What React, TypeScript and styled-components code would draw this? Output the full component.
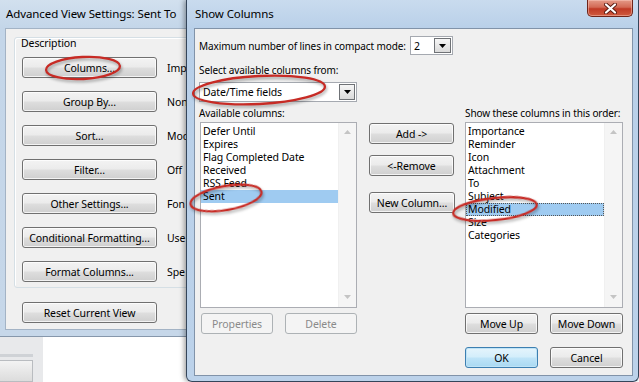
import React from "react";
import styled, { createGlobalStyle, css } from "styled-components";

const GlobalStyle = createGlobalStyle`
  html, body {
    margin: 0;
    padding: 0;
    background: #fff;
  }
  body {
    font-family: "Noto Sans", "Open Sans", sans-serif;
    font-size: 10px;
    letter-spacing: -0.1px;
    color: #000;
  }
`;

const Desktop = styled.div`
  position: relative;
  width: 639px;
  height: 382px;
  overflow: hidden;
  background: #fff;
`;

/* what peeks out behind the dialogs, bottom left */
const BackWindow = styled.div`
  position: absolute;
  left: 0;
  top: 337px;
  width: 43px;
  height: 45px;
  background: #e8e9eb;
  display: flex;
  flex-direction: column;
  padding-top: 17px;
  box-sizing: border-box;
`;
const BackStripe = styled.div`
  width: 33px;
  height: 3px;
  background: #cfd2d6;
`;
const BackBox = styled.div`
  margin-top: 3px;
  width: 33px;
  flex: 1;
  box-sizing: border-box;
  border: 1px solid #b9bcc0;
  border-left: none;
  background: linear-gradient(#f3f3f3, #dcdcdc);
`;

const Window = styled.div<{ $active?: boolean }>`
  position: absolute;
  top: 0;
  box-sizing: border-box;
  display: flex;
  flex-direction: column;
  background: ${(p) =>
    p.$active
      ? "linear-gradient(#c9dbee 0px, #b9d0e9 28px, #bcd2ea 100%)"
      : "linear-gradient(#d2e0ee 0px, #c4d6e9 28px, #c6d7e9 100%)"};
`;

/* only its left part shows; the rest sits under Show Columns */
const AdvancedWindow = styled(Window)`
  left: 0;
  width: 187px;
  height: 337px;
  overflow: hidden;
  border-bottom: 1px solid #8697ab;
`;

const ColumnsWindow = styled(Window)`
  left: 186px;
  width: 453px;
  height: 382px;
  border: 1px solid #34455a;
  border-top: none;
  border-radius: 0 0 6px 6px;
  box-shadow: -2px 0 5px rgba(0, 0, 0, 0.35);
`;

const TitleBar = styled.div<{ $pad: number }>`
  height: 28px;
  flex: none;
  display: flex;
  align-items: flex-start;
  padding-left: ${(p) => p.$pad}px;
`;

const TitleText = styled.span`
  font-size: 11.5px;
  line-height: 14px;
  padding-top: 7px;
  color: #000;
  white-space: nowrap;
`;

const CloseButton = styled.div`
  margin-left: auto;
  margin-right: 5px;
  width: 46px;
  height: 17px;
  box-sizing: border-box;
  border: 1px solid #6e2419;
  border-top: none;
  border-radius: 0 0 5px 5px;
  background: linear-gradient(#e49a88 0%, #d36a55 45%, #c03a25 55%, #cf5a3f 100%);
  display: flex;
  align-items: center;
  justify-content: center;
  box-shadow: inset 0 0 0 1px rgba(255, 210, 200, 0.45);
`;

const Client = styled.div<{ $active?: boolean }>`
  flex: 1;
  box-sizing: border-box;
  background: #f0f0f0;
  border: 1px solid ${(p) => (p.$active ? "#8193a9" : "#a3b3c5")};
  display: flex;
  flex-direction: column;
`;

const AdvancedClient = styled(Client)`
  width: 300px;
  margin: 0 0 6px 5px;
  padding: 8px 8px 6px 8px;
`;

const ColumnsClient = styled(Client)`
  margin: 0 5px 5px 7px;
  padding: 6px 0 0 4px;
`;

/* ---- Advanced View Settings ---- */

const GroupBox = styled.div`
  border: 1px solid #d5dfe5;
  border-radius: 3px;
  box-shadow: inset 1px 1px 0 #fff;
  padding: 0 0 5px 7px;
  display: flex;
  flex-direction: column;
  gap: 13px;
`;

const GroupLabel = styled.div`
  margin: -2px 0 -6px -1px;
  line-height: 14px;
  font-size: 10.5px;
`;

const SettingRow = styled.div`
  display: flex;
  align-items: center;
  gap: 10px;
`;

/* the description runs on under the other dialog; only its start shows */
const SettingInfo = styled.span`
  width: 19px;
  overflow: hidden;
  white-space: nowrap;
  font-size: 10.5px;
`;

const Button = styled.button<{ $w: number; $default?: boolean }>`
  box-sizing: border-box;
  flex: none;
  width: ${(p) => p.$w}px;
  height: 21px;
  padding: 0;
  font-family: inherit;
  font-size: 10.5px;
  letter-spacing: inherit;
  color: #000;
  border: 1px solid #707070;
  border-radius: 3px;
  background: linear-gradient(#f3f3f3 0%, #ebebeb 48%, #dedede 52%, #cfcfcf 100%);
  box-shadow: inset 0 0 0 1px rgba(255, 255, 255, 0.75);
  &:disabled {
    color: #8a8a8a;
    border-color: #adb2b5;
    background: #f4f4f4;
    box-shadow: none;
  }
  ${(p) =>
    p.$default &&
    css`
      border-color: #3c7fb1;
      background: linear-gradient(#e5f4fc 0%, #d3eefb 48%, #bfe4f8 52%, #a9d9f2 100%);
      box-shadow: inset 0 0 0 1px #bfe3f6;
    `}
`;

const ResetRow = styled.div`
  margin-top: 14px;
  padding-left: 8px;
`;

/* ---- Show Columns ---- */

const FieldRow = styled.div`
  display: flex;
  align-items: center;
  height: 19px;
  margin-top: 1px;
`;

const FieldLabel = styled.span<{ $w?: number }>`
  line-height: 14px;
  white-space: nowrap;
  ${(p) => p.$w && `width: ${p.$w}px;`}
`;

const Caption = styled.div<{ $mt: number }>`
  line-height: 14px;
  margin-top: ${(p) => p.$mt}px;
  white-space: nowrap;
`;

const Combo = styled.div<{ $w: number; $h: number }>`
  box-sizing: border-box;
  width: ${(p) => p.$w}px;
  height: ${(p) => p.$h}px;
  display: flex;
  border: 1px solid #a5a9b0;
  background: #fff;
`;

const BigCombo = styled(Combo)`
  margin-top: 5px;
`;

const ComboValue = styled.span`
  flex: 1;
  display: flex;
  align-items: center;
  padding-left: 3px;
  white-space: nowrap;
  font-size: 10.5px;
`;

const ComboArrow = styled.span<{ $w: number }>`
  box-sizing: border-box;
  width: ${(p) => p.$w}px;
  margin: 1px;
  border: 1px solid #6f7276;
  background: linear-gradient(#f6f6f6, #dadada);
  display: flex;
  align-items: center;
  justify-content: center;
`;

const Lists = styled.div`
  display: flex;
  margin-top: 1px;
`;

const ListColumn = styled.div<{ $ml: number }>`
  display: flex;
  flex-direction: column;
  width: 158px;
  margin-left: ${(p) => p.$ml}px;
`;

const MiddleColumn = styled.div`
  display: flex;
  flex-direction: column;
  margin-left: 12px;
  padding-top: 20px;
  width: 86px;
`;

const MiddleGap = styled.div<{ $h: number }>`
  height: ${(p) => p.$h}px;
`;

const ListBox = styled.div<{ $ml?: number }>`
  box-sizing: border-box;
  margin-top: 2px;
  margin-left: ${(p) => p.$ml ?? 0}px;
  height: 186px;
  border: 1px solid #abadb3;
  background: #fff;
  display: flex;
`;

const ListItems = styled.ul`
  flex: 1;
  margin: 0;
  padding: 2px 0 0 0;
  list-style: none;
`;

const ListItem = styled.li<{ $selected?: boolean; $focused?: boolean }>`
  height: 13px;
  line-height: 13px;
  padding-left: 2px;
  font-size: 10.5px;
  white-space: nowrap;
  box-sizing: border-box;
  ${(p) =>
    p.$selected &&
    css`
      background: #9fcbf1;
    `}
  ${(p) =>
    p.$focused &&
    css`
      outline: 1px dotted #555;
      outline-offset: -1px;
    `}
`;

const ScrollTrack = styled.div`
  width: 17px;
  background: #f5f5f5;
  border-left: 1px solid #f0f0f0;
  display: flex;
  flex-direction: column;
  justify-content: space-between;
  align-items: center;
  padding: 7px 0 8px;
`;

const ButtonPair = styled.div<{ $mt: number; $ml?: number }>`
  display: flex;
  justify-content: space-between;
  margin-top: ${(p) => p.$mt}px;
  margin-left: ${(p) => p.$ml ?? 0}px;
`;

const Annotations = styled.svg`
  position: absolute;
  left: 0;
  top: 0;
  width: 639px;
  height: 382px;
  pointer-events: none;
  overflow: visible;
`;

const Arrow = ({ up, color }: { up?: boolean; color: string }) => (
  <svg width="7" height="4" viewBox="0 0 7 4">
    <path d={up ? "M0 4 L3.5 0 L7 4 Z" : "M0 0 L7 0 L3.5 4 Z"} fill={color} />
  </svg>
);

const settings = [
  { label: "Columns...", info: "Imp" },
  { label: "Group By...", info: "Non" },
  { label: "Sort...", info: "Mod" },
  { label: "Filter...", info: "Off" },
  { label: "Other Settings...", info: "Fon" },
  { label: "Conditional Formatting...", info: "Use" },
  { label: "Format Columns...", info: "Spe" },
];

const available = ["Defer Until", "Expires", "Flag Completed Date", "Received", "RSS Feed", "Sent"];
const shown = ["Importance", "Reminder", "Icon", "Attachment", "To", "Subject", "Modified", "Size", "Categories"];

const App = () => {
  return (
    <Desktop>
      <GlobalStyle />
      <BackWindow>
        <BackStripe />
        <BackBox />
      </BackWindow>

      <AdvancedWindow>
        <TitleBar $pad={6}>
          <TitleText>Advanced View Settings: Sent To</TitleText>
        </TitleBar>
        <AdvancedClient>
          <GroupBox>
            <GroupLabel>Description</GroupLabel>
            {settings.map((s) => (
              <SettingRow key={s.label}>
                <Button $w={135}>{s.label}</Button>
                <SettingInfo>{s.info}</SettingInfo>
              </SettingRow>
            ))}
          </GroupBox>
          <ResetRow>
            <Button $w={135}>Reset Current View</Button>
          </ResetRow>
        </AdvancedClient>
      </AdvancedWindow>

      <ColumnsWindow $active>
        <TitleBar $pad={8}>
          <TitleText>Show Columns</TitleText>
          <CloseButton>
            <svg width="13" height="11" viewBox="0 0 13 11">
              <path d="M2 1.5 L11 9.5 M11 1.5 L2 9.5" stroke="#5a1a10" strokeWidth="4" strokeLinecap="round" />
              <path d="M2 1.5 L11 9.5 M11 1.5 L2 9.5" stroke="#fff" strokeWidth="2.2" strokeLinecap="round" />
            </svg>
          </CloseButton>
        </TitleBar>
        <ColumnsClient $active>
          <FieldRow>
            <FieldLabel $w={211}>Maximum number of lines in compact mode:</FieldLabel>
            <Combo $w={43} $h={19}>
              <ComboValue>2</ComboValue>
              <ComboArrow $w={17}>
                <Arrow color="#000" />
              </ComboArrow>
            </Combo>
          </FieldRow>
          <Caption $mt={8}>Select available columns from:</Caption>
          <BigCombo $w={158} $h={20}>
            <ComboValue>Date/Time fields</ComboValue>
            <ComboArrow $w={16}>
              <Arrow color="#000" />
            </ComboArrow>
          </BigCombo>
          <Lists>
            <ListColumn $ml={0}>
              <Caption $mt={3}>Available columns:</Caption>
              <ListBox $ml={1}>
                <ListItems>
                  {available.map((c) => (
                    <ListItem key={c} $selected={c === "Sent"}>
                      {c}
                    </ListItem>
                  ))}
                </ListItems>
                <ScrollTrack>
                  <Arrow up color="#c4c4c4" />
                  <Arrow color="#c4c4c4" />
                </ScrollTrack>
              </ListBox>
              <ButtonPair $mt={5} $ml={2}>
                <Button $w={72} disabled>
                  Properties
                </Button>
                <Button $w={72} disabled>
                  Delete
                </Button>
              </ButtonPair>
            </ListColumn>

            <MiddleColumn>
              <Button $w={85}>Add -&gt;</Button>
              <MiddleGap $h={11} />
              <Button $w={85}>&lt;-Remove</Button>
              <MiddleGap $h={16} />
              <Button $w={86}>New Column...</Button>
            </MiddleColumn>

            <ListColumn $ml={10}>
              <Caption $mt={3}>Show these columns in this order:</Caption>
              <ListBox>
                <ListItems>
                  {shown.map((c) => (
                    <ListItem key={c} $selected={c === "Modified"} $focused={c === "Modified"}>
                      {c}
                    </ListItem>
                  ))}
                </ListItems>
                <ScrollTrack>
                  <Arrow up color="#c4c4c4" />
                  <Arrow color="#c4c4c4" />
                </ScrollTrack>
              </ListBox>
              <ButtonPair $mt={5}>
                <Button $w={73}>Move Up</Button>
                <Button $w={73}>Move Down</Button>
              </ButtonPair>
              <ButtonPair $mt={13}>
                <Button $w={73} $default>
                  OK
                </Button>
                <Button $w={73}>Cancel</Button>
              </ButtonPair>
            </ListColumn>
          </Lists>
        </ColumnsClient>
      </ColumnsWindow>

      <Annotations viewBox="0 0 639 382">
        <g
          fill="none"
          stroke="#c72b25"
          strokeWidth="2.3"
          style={{ filter: "drop-shadow(1px 2px 1.5px rgba(0,0,0,0.35))" }}
        >
          <ellipse cx="83" cy="68" rx="37" ry="11" transform="rotate(-3 83 68)" />
          <ellipse cx="259" cy="90" rx="66" ry="14" transform="rotate(-3 259 90)" />
          <ellipse cx="226" cy="198" rx="36" ry="12" transform="rotate(-10 226 198)" />
          <ellipse cx="495" cy="209" rx="42" ry="11" transform="rotate(-6 495 209)" />
        </g>
      </Annotations>
    </Desktop>
  );
};

export default App;
